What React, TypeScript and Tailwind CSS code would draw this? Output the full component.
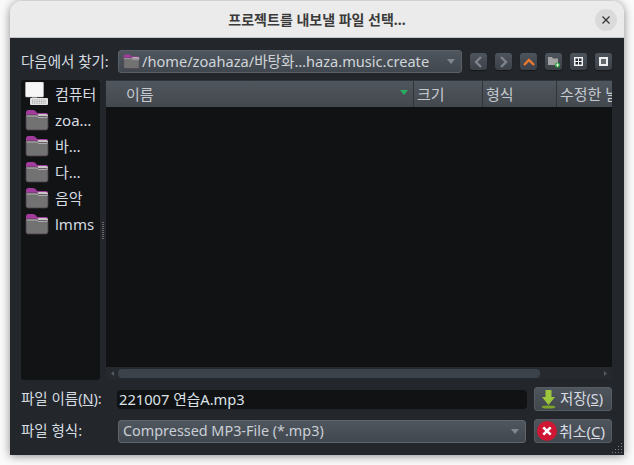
import React from "react";

const font = { fontFamily: '"Noto Sans", "Noto Sans CJK KR", sans-serif' };

function Folder({ className = "" }: { className?: string }) {
  return (
    <svg width="24" height="22" viewBox="0 0 24 22" className={className}>
      <path d="M1 3.5 Q1 1 3.5 1 H8 Q10 1 11 2.5 L12 4 H21 Q23 4 23 6 V9 H1 Z" fill="#a23c9c" />
      <path d="M1 6 H12 L14 5 H21 Q23 5 23 7 V8 H1 Z" fill="#c9c4c6" />
      <path d="M1 7 Q1 6 2 6 H11 Q12.5 6 13.5 7.5 H21.5 Q23 7.5 23 9 V19 Q23 21 21 21 H3 Q1 21 1 19 Z" fill="#727272" stroke="#4a3d4a" strokeWidth="0.8" />
      <path d="M1.5 7 H11 Q12.5 7 13.5 8.4 H22.5" fill="none" stroke="#b4b4b4" strokeWidth="1" />
    </svg>
  );
}

function Computer() {
  return (
    <svg width="23" height="24" viewBox="0 0 23 24" className="mt-[-1px]">
      <rect x="0.5" y="0" width="18" height="15" rx="1" fill="#f6f6f6" stroke="#c4c4c4" strokeWidth="0.5" />
      <rect x="7" y="15" width="5" height="2" fill="#8f8f8f" />
      <rect x="5" y="16" width="18" height="7" rx="1" fill="#e4e4e4" />
      <path d="M7 18 H21 M7 19.6 H21 M7 21.2 H21" stroke="#8a8a8a" strokeWidth="0.7" strokeDasharray="1 0.8" />
    </svg>
  );
}

function Tool({ children }: { children: React.ReactNode }) {
  return (
    <div className="flex h-[17px] w-[17px] items-center justify-center rounded-[3px] bg-gradient-to-b from-[#4e545c] to-[#3c4148] shadow-[0_1px_1px_rgba(0,0,0,0.4)]">
      {children}
    </div>
  );
}

function Arrow() {
  return (
    <svg width="8" height="5" viewBox="0 0 8 5" className="shrink-0">
      <path d="M0 0 H8 L4 5 Z" fill="#82878d" />
    </svg>
  );
}

function Side({ icon, label }: { icon: React.ReactNode; label: string }) {
  return (
    <div className="flex h-[26px] items-center">
      <div className="ml-[4px] w-[30px] shrink-0">{icon}</div>
      <span className="text-[15px] leading-none text-[#d6dce2]">{label}</span>
    </div>
  );
}

function HeaderCell({ label, className, children }: { label: string; className: string; children?: React.ReactNode }) {
  return (
    <div className={`flex h-full shrink-0 items-center border-r border-[#2f343a] text-[15px] text-[#c4cad0] ${className}`}>
      <span className="whitespace-nowrap">{label}</span>
      {children}
    </div>
  );
}

export default function App() {
  return (
    <div className="h-[465px] w-[634px] overflow-hidden bg-[#fafafa] pl-[10px] pt-[1px]" style={font}>
      <div className="relative flex h-[454px] w-[614px] flex-col overflow-hidden rounded-t-[12px] shadow-[0_1px_10px_rgba(0,0,0,0.45)]">
        {/* Title bar */}
        <div className="relative flex h-[37px] shrink-0 items-center justify-center border-b border-[#c4c4c4] bg-[#ebebeb]">
          <span className="text-[14px] font-bold text-[#3a3a3a]">프로젝트를 내보낼 파일 선택...</span>
          <div className="absolute right-[7px] top-[8px] flex h-[22px] w-[22px] items-center justify-center rounded-full bg-[#dadada]">
            <svg width="10" height="10" viewBox="0 0 10 10">
              <path d="M1.5 1.5 L8.5 8.5 M8.5 1.5 L1.5 8.5" stroke="#333" strokeWidth="1.2" />
            </svg>
          </div>
        </div>

        {/* Body */}
        <div className="relative flex flex-1 flex-col bg-[#23272b] pb-[12px] pl-[11px] pr-[12px] pt-[12px] text-[#c9cfd6]">
          {/* Look in */}
          <div className="flex h-[23px] items-center">
            <span className="w-[97px] shrink-0 whitespace-nowrap text-[14.5px] text-[#d6dce2]">다음에서 찾기:</span>
            <div className="flex h-[23px] w-[344px] shrink-0 items-center rounded-[3px] border border-[#5a6067] bg-gradient-to-b from-[#50565e] to-[#41474e] pl-[4px] pr-[6px]">
              <Folder className="h-[17px] w-[17px] shrink-0" />
              <span className="ml-[2px] flex-1 whitespace-nowrap text-[14.6px] leading-none text-[#d0d5da]">/home/zoahaza/바탕화…haza.music.create</span>
              <Arrow />
            </div>
            <div className="ml-[8px] flex gap-[8px]">
              <Tool>
                <svg width="9" height="12" viewBox="0 0 9 12"><path d="M7 1 L2 6 L7 11" fill="none" stroke="#7f848a" strokeWidth="2.4" /></svg>
              </Tool>
              <Tool>
                <svg width="9" height="12" viewBox="0 0 9 12"><path d="M2 1 L7 6 L2 11" fill="none" stroke="#7f848a" strokeWidth="2.4" /></svg>
              </Tool>
              <Tool>
                <svg width="12" height="8" viewBox="0 0 12 8"><path d="M1 7 L6 2 L11 7" fill="none" stroke="#ee7a2f" strokeWidth="2.4" /></svg>
              </Tool>
              <Tool>
                <svg width="14" height="13" viewBox="0 0 14 13">
                  <path d="M1 2 H5 L6 3.5 H11 V10 H1 Z" fill="#a3a3a3" />
                  <circle cx="10.5" cy="10" r="2.6" fill="#2ea043" />
                  <path d="M8.9 10 H12.1 M10.5 8.4 V11.6" stroke="#fff" strokeWidth="0.9" />
                </svg>
              </Tool>
              <Tool>
                <svg width="9" height="9" viewBox="0 0 9 9">
                  <rect width="9" height="9" fill="#eef1f4" />
                  <path d="M1.5 1.5 H4 V4 H1.5 Z M5 1.5 H7.5 V4 H5 Z M1.5 5 H4 V7.5 H1.5 Z M5 5 H7.5 V7.5 H5 Z" fill="#26282b" />
                </svg>
              </Tool>
              <Tool>
                <svg width="9" height="9" viewBox="0 0 9 9">
                  <rect width="9" height="9" fill="#eceef0" />
                  <rect x="2" y="2" width="5" height="5" fill="#66696c" />
                </svg>
              </Tool>
            </div>
          </div>

          {/* Main */}
          <div className="mt-[7px] flex h-[300px] shrink-0">
            <div className="w-[79px] shrink-0 rounded-[3px] bg-[#111315] pt-[1px]">
              <Side icon={<Computer />} label="컴퓨터" />
              <Side icon={<Folder />} label="zoa…" />
              <Side icon={<Folder />} label="바…" />
              <Side icon={<Folder />} label="다…" />
              <Side icon={<Folder />} label="음악" />
              <Side icon={<Folder />} label="lmms" />
            </div>
            <div className="flex w-[6px] shrink-0 items-center justify-center">
              <div className="mt-[2px] h-[18px] w-[2px] bg-[repeating-linear-gradient(to_bottom,#666_0,#666_1px,transparent_1px,transparent_2px)]" />
            </div>
            <div className="flex min-w-0 flex-1 flex-col overflow-hidden border-t border-[#30353a] bg-[#101214]">
              <div className="flex h-[26px] shrink-0 items-center bg-gradient-to-b from-[#50565d] to-[#43484f]">
                <HeaderCell label="이름" className="w-[308px] pl-[20px]">
                  <svg width="8" height="5" viewBox="0 0 8 5" className="ml-auto mr-[5px] mt-[-3px]">
                    <path d="M0 0 H8 L4 5 Z" fill="#27ae60" />
                  </svg>
                </HeaderCell>
                <HeaderCell label="크기" className="w-[69px] pl-[3px]" />
                <HeaderCell label="형식" className="w-[74px] pl-[3px]" />
                <div className="flex h-full min-w-0 flex-1 items-center overflow-hidden pl-[3px] text-[15px] text-[#c4cad0]">
                  <span className="whitespace-nowrap">수정한 날</span>
                </div>
              </div>
              <div className="flex-1" />
              <div className="flex h-[12px] shrink-0 items-end justify-between bg-[#262a2f] pb-[1px]">
                <svg width="12" height="9" viewBox="0 0 12 9" className="shrink-0"><path d="M8 2 V7 L5 4.5 Z" fill="#555b62" /></svg>
                <div className="h-[9px] w-[422px] rounded-[4px] bg-[#3b424a]" />
                <div className="flex-1" />
                <svg width="12" height="9" viewBox="0 0 12 9" className="shrink-0"><path d="M4 2 V7 L7 4.5 Z" fill="#555b62" /></svg>
              </div>
              <div className="h-[1px] shrink-0 bg-[#23272b]" />
            </div>
          </div>

          {/* File name */}
          <div className="mt-[7px] flex h-[24px] items-center">
            <span className="w-[96px] shrink-0 whitespace-nowrap text-[14.5px] text-[#d6dce2]">
              파일 이름(<span className="underline">N</span>):
            </span>
            <div className="flex h-[19px] w-[410px] shrink-0 items-center rounded-[4px] bg-[#101214] pl-[2px] text-[14.7px] leading-none text-[#dde2e7]">
              221007 연습A.mp3
            </div>
            <button className="ml-[7px] flex h-[24px] w-[78px] shrink-0 items-center rounded-[3px] border border-[#565c63] bg-gradient-to-b from-[#4f555c] to-[#42474e] pl-[6px] text-[14.4px] text-[#d6dce2]">
              <svg width="15" height="19" viewBox="0 0 15 19" className="mr-[4px]">
                <path d="M4.5 0 H10.5 V7 H14 L7.5 15 L1 7 H4.5 Z" fill="#9cc63c" />
                <ellipse cx="7.5" cy="17" rx="7" ry="1.6" fill="#7da32c" />
              </svg>
              <span>저장(<span className="underline">S</span>)</span>
            </button>
          </div>

          {/* File type */}
          <div className="mt-[8px] flex h-[24px] items-center">
            <span className="w-[97px] shrink-0 text-[14.5px] text-[#d6dce2]">파일 형식:</span>
            <div className="flex h-[23px] w-[408px] shrink-0 items-center rounded-[3px] border border-[#5f656b] bg-gradient-to-b from-[#50565e] to-[#41474e] pl-[4px] pr-[6px]">
              <span className="flex-1 whitespace-nowrap text-[14.4px] text-[#c9cfd6]">Compressed MP3-File (*.mp3)</span>
              <Arrow />
            </div>
            <button className="ml-[8px] flex h-[24px] w-[78px] shrink-0 items-center rounded-[3px] border border-[#565c63] bg-gradient-to-b from-[#4f555c] to-[#42474e] pl-[2px] text-[15px] text-[#d6dce2]">
              <svg width="20" height="20" viewBox="0 0 20 20" className="mr-[2px]">
                <circle cx="10" cy="10" r="10" fill="#cf1733" />
                <path d="M6.3 6.3 L13.7 13.7 M13.7 6.3 L6.3 13.7" stroke="#fff" strokeWidth="2.6" />
              </svg>
              <span>취소(<span className="underline">C</span>)</span>
            </button>
          </div>

          {/* Resize grip */}
          <svg width="12" height="12" viewBox="0 0 12 12" className="absolute bottom-[1px] right-[1px]">
            <path d="M10 1 h1 v1 h-1 Z M7 4 h1 v1 h-1 Z M10 4 h1 v1 h-1 Z M4 7 h1 v1 h-1 Z M7 7 h1 v1 h-1 Z M10 7 h1 v1 h-1 Z M1 10 h1 v1 h-1 Z M4 10 h1 v1 h-1 Z M7 10 h1 v1 h-1 Z M10 10 h1 v1 h-1 Z" fill="#7b8086" />
          </svg>
        </div>
      </div>
    </div>
  );
}
